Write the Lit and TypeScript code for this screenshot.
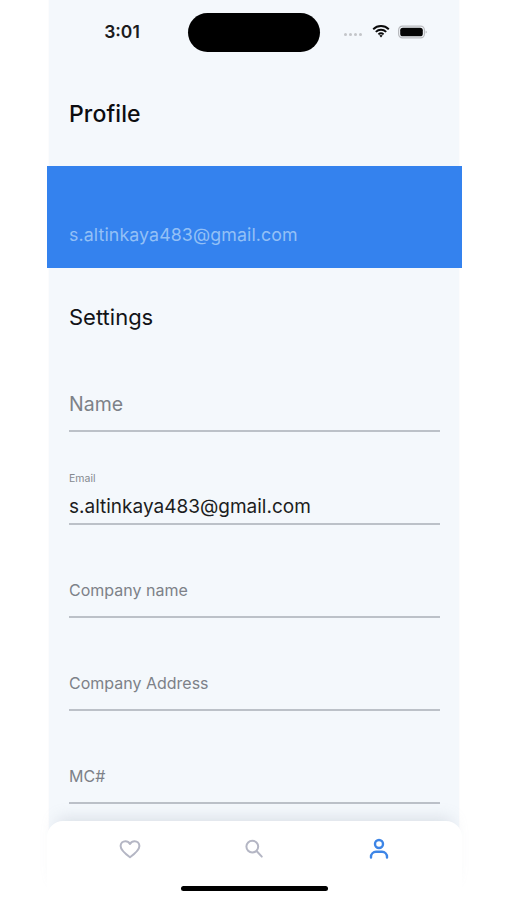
import { LitElement, html, css, svg } from "lit";
import { customElement } from "lit/decorators.js";

@customElement("app-root")
export class AppRoot extends LitElement {
  static styles = css`
    :host { display: block; width: 507px; height: 900px; background: #fff; overflow: hidden; position: relative;
      font-family: Inter, "Open Sans", sans-serif; color: #14161a; }
    .screen { width: 410px; height: 900px; margin-left: 49px; background: #f4f8fc; display: flex; flex-direction: column; position: relative; box-shadow: 0 0 1px #e9edf2; }
    .status { height: 52px; padding-top: 13px; box-sizing: content-box; display: grid; grid-template-columns: 139px 132px 1fr; }
    .time { font-size: 17.5px; font-weight: 600; text-align: center; padding: 8px 0 0 7px; line-height: 21px; color: #1b1b1d; }
    .island { width: 132px; height: 39px; border-radius: 20px; background: #000; }
    .sys { display: flex; align-items: center; height: 36px; padding-left: 24px; gap: 9px; }
    .dots { display: flex; gap: 2px; margin-top: 7px; }
    .dots i { width: 3px; height: 3px; border-radius: 50%; background: #c3c5c9; }
    .wifi { width: 18px; height: 14px; margin-left: 1px; }
    .bat { width: 29px; height: 14px; margin-left: -1px; margin-top: 2px; }
    h1 { margin: 33px 0 0 20px; font-size: 23px; line-height: 32px; font-weight: 500; color: #0c0d10; letter-spacing: 0.1px; }
    .band { margin: 36px -3px 0 -2px; height: 102px; background: #3482ee; display: flex; align-items: flex-end; padding: 0 0 21px 22px; box-sizing: border-box; color: #93c0f6; font-size: 17.8px; line-height: 24px; letter-spacing: 0.1px; }
    h2 { margin: 34px 0 0 20px; font-size: 22px; line-height: 30px; font-weight: 400; color: #121317; }
    .fields { margin: 0 19px 0 20px; display: flex; flex-direction: column; }
    .field { border-bottom: 2px solid #bcc1c8; box-sizing: border-box; height: 93px; display: flex; flex-direction: column; justify-content: flex-end; }
    .field.first { height: 100px; }
    .ph { color: #7d8188; font-size: 16px; line-height: 20px; padding-bottom: 16px; }
    .ph.big { font-size: 19.5px; line-height: 24px; padding-bottom: 14px; }
    .lab { color: #85898f; font-size: 10.5px; line-height: 14px; padding-bottom: 7px; }
    .val { font-size: 19px; line-height: 24px; color: #1c1d21; padding: 2px 0 4px; }
    .nav { position: absolute; left: 47px; top: 821px; width: 415px; height: 79px; background: #fff; border-radius: 16px 16px 0 0; box-shadow: 0 -12px 16px -10px rgba(150,160,175,0.3); display: grid; grid-template-columns: repeat(3, 124.5px); justify-content: center; justify-items: center; }
    .nav svg { width: 24px; height: 24px; margin-top: 16px; fill: none; stroke-linecap: round; stroke-linejoin: round; }
    .grey { stroke: #b4b6c4; stroke-width: 2; }
    .blue { stroke: #3d85e6; stroke-width: 2.4; }
    .home { position: absolute; left: 181px; top: 886px; width: 147px; height: 5px; border-radius: 3px; background: #000; }
  `;

  render() {
    return html`
      <div class="screen">
        <div class="status">
          <div class="time">3:01</div>
          <div class="island"></div>
          <div class="sys">
            <div class="dots"><i></i><i></i><i></i><i></i></div>
            <svg class="wifi" viewBox="0 0 18 14">
              <path d="M1.2 5.2C5.6 1 12.4 1 16.8 5.2M3.8 7.9C6.8 5.1 11.2 5.1 14.2 7.9M6.4 10.4C7.9 9.1 10.1 9.1 11.6 10.4" fill="none" stroke="#0a0a0a" stroke-width="1.9"/>
              <path d="M7.3 11.5L9 13.4L10.7 11.5C9.7 10.7 8.3 10.7 7.3 11.5Z" fill="#0a0a0a"/>
            </svg>
            <svg class="bat" viewBox="0 0 29 14">
              <rect x="0.6" y="1.1" width="25.8" height="11.8" rx="3.8" fill="none" stroke="#b9bbbf" stroke-width="1.2"/>
              <rect x="2.2" y="2.7" width="22.6" height="8.6" rx="2.6" fill="#050505"/>
              <path d="M27.6 5.4C28.4 5.7 28.8 6.3 28.8 7C28.8 7.7 28.4 8.3 27.6 8.6Z" fill="#b9bbbf"/>
            </svg>
          </div>
        </div>
        <h1>Profile</h1>
        <div class="band">s.altinkaya483@gmail.com</div>
        <h2>Settings</h2>
        <div class="fields">
          <div class="field first"><div class="ph big">Name</div></div>
          <div class="field"><div class="lab">Email</div><div class="val">s.altinkaya483@gmail.com</div></div>
          <div class="field"><div class="ph">Company name</div></div>
          <div class="field"><div class="ph">Company Address</div></div>
          <div class="field"><div class="ph">MC#</div></div>
        </div>
      </div>
      <div class="nav">
        <svg viewBox="0 0 24 24" class="grey">${svg`<path d="M12 20.2C6.6 16.4 2.6 13.2 2.6 9.1C2.6 6.2 4.8 4.2 7.4 4.2C9.3 4.2 11 5.2 12 6.9C13 5.2 14.7 4.2 16.6 4.2C19.2 4.2 21.4 6.2 21.4 9.1C21.4 13.2 17.4 16.4 12 20.2Z"/>`}</svg>
        <svg viewBox="0 0 24 24" class="grey">${svg`<circle cx="9.3" cy="9.6" r="5.9"/><path d="M13.8 14.2L18.8 19.6"/>`}</svg>
        <svg viewBox="0 0 24 24" class="blue">${svg`<circle cx="12" cy="7" r="4"/><path d="M4 20.6V19.8C4 17 6.2 14.8 9 14.8H15C17.8 14.8 20 17 20 19.8V20.6"/>`}</svg>
      </div>
      <div class="home"></div>
    `;
  }
}
